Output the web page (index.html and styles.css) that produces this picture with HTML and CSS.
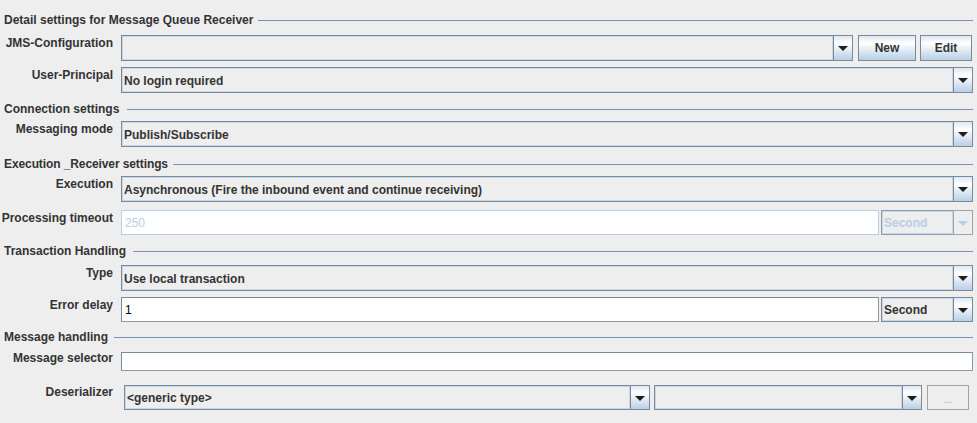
FILE: index.html
```html
<!DOCTYPE html>
<html>
<head>
<meta charset="utf-8">
<link rel="stylesheet" href="styles.css">
</head>
<body>
<div class="panel">
  <div class="title t1"><span>Detail settings for Message Queue Receiver</span><i class="rule"></i></div>

  <div class="row r-jms">
    <div class="label">JMS-Configuration</div>
    <div class="field-group">
      <div class="combo grow"><div class="combo-text"></div><div class="arrow"><b class="tri"></b></div></div>
      <button class="btn btn-new">New</button>
      <button class="btn btn-edit">Edit</button>
    </div>
  </div>

  <div class="row r-user">
    <div class="label">User-Principal</div>
    <div class="combo"><div class="combo-text">No login required</div><div class="arrow"><b class="tri"></b></div></div>
  </div>

  <div class="title t2"><span>Connection settings</span><i class="rule"></i></div>

  <div class="row r-mode">
    <div class="label">Messaging mode</div>
    <div class="combo"><div class="combo-text">Publish/Subscribe</div><div class="arrow"><b class="tri"></b></div></div>
  </div>

  <div class="title t3"><span class="exec-title">Execution _Receiver settings</span><i class="rule"></i></div>

  <div class="row r-exec">
    <div class="label">Execution</div>
    <div class="combo"><div class="combo-text">Asynchronous (Fire the inbound event and continue receiving)</div><div class="arrow"><b class="tri"></b></div></div>
  </div>

  <div class="row r-timeout">
    <div class="label">Processing timeout</div>
    <div class="field-group g2">
      <div class="textfield disabled grow">250</div>
      <div class="combo small disabled"><div class="combo-text">Second</div><div class="arrow"><b class="tri"></b></div></div>
    </div>
  </div>

  <div class="title t4"><span>Transaction Handling</span><i class="rule"></i></div>

  <div class="row r-type">
    <div class="label">Type</div>
    <div class="combo"><div class="combo-text">Use local transaction</div><div class="arrow"><b class="tri"></b></div></div>
  </div>

  <div class="row r-delay">
    <div class="label">Error delay</div>
    <div class="field-group g2">
      <div class="textfield grow">1</div>
      <div class="combo small"><div class="combo-text">Second</div><div class="arrow"><b class="tri"></b></div></div>
    </div>
  </div>

  <div class="title t5"><span>Message handling</span><i class="rule"></i></div>

  <div class="row r-sel">
    <div class="label">Message selector</div>
    <div class="textfield thin"></div>
  </div>

  <div class="row r-deser">
    <div class="label">Deserializer</div>
    <div class="field-group deser">
      <div class="combo c-generic"><div class="combo-text">&lt;generic type&gt;</div><div class="arrow"><b class="tri"></b></div></div>
      <div class="combo c-second"><div class="combo-text"></div><div class="arrow"><b class="tri"></b></div></div>
      <button class="btn dots">...</button>
    </div>
  </div>
</div>
</body>
</html>
```

FILE: styles.css
```css
* { box-sizing: border-box; }
html, body {
  margin: 0;
  background: #eeeeee;
}
body {
  font-family: "Liberation Sans", Arial, sans-serif;
  font-size: 12px;
  font-weight: bold;
  color: #333333;
  width: 977px;
  height: 423px;
  overflow: hidden;
}
.panel {
  padding: 12px 4px 0 4px;
  display: flex;
  flex-direction: column;
}

/* titled separators */
.title {
  display: flex;
  align-items: center;
  height: 14px;
  line-height: 14px;
  white-space: nowrap;
}
.title > span { padding-right: 5px; }
.exec-title { letter-spacing: -0.1px; }
.rule {
  flex: 1;
  height: 1px;
  background: #7b8fbd;
  margin-top: 1px;
}
.t1 { margin-top: 1px; }
.t2 { margin-top: 9px; }
.t2 > span { padding-right: 8px; }
.t3 { margin-top: 10px; }
.t4 { margin-top: 9px; }
.t4 > span { padding-right: 7px; }
.t5 { margin-top: 8px; }
.t5 > span { padding-right: 6px; }

/* form rows */
.row {
  display: grid;
  grid-template-columns: 117px 1fr;
  height: 26px;
}
.label {
  display: flex;
  justify-content: flex-end;
  white-space: nowrap;
  padding-right: 8px;
  padding-top: 1px;
  line-height: 14px;
}
.r-jms { margin-top: 8px; }
.r-user { margin-top: 6px; }
.r-mode { margin-top: 5px; }
.r-exec { margin-top: 5px; }
.r-timeout { margin-top: 8px; height: 25px; }
.r-type { margin-top: 7px; }
.r-delay { margin-top: 6px; height: 25px; }
.r-sel { margin-top: 8px; height: 19px; }
.r-sel .label { padding-top: 0; margin-top: -1px; }
.r-deser { margin-top: 14px; height: 25px; }
.r-deser .label { padding-top: 0; }

.field-group {
  display: flex;
  gap: 5px;
  height: 100%;
}
.field-group.g2 { gap: 2px; }
.grow { flex: 1; }

/* combo box */
.combo {
  display: flex;
  height: 100%;
  border: 1px solid #7a8a99;
  background: #eeeeee;
}
.combo-text {
  flex: 1;
  box-shadow: inset 0 0 0 1px #c8d7e7;
  padding-left: 2px;
  padding-top: 1px;
  display: flex;
  align-items: center;
  white-space: nowrap;
  overflow: hidden;
  color: #333333;
}
.arrow {
  width: 19px;
  border-left: 1px solid #7a8a99;
  background: linear-gradient(to bottom, #dde8f3 0%, #ffffff 30%, #b8cfe5 100%);
  display: flex;
  align-items: center;
  justify-content: center;
}
.tri {
  width: 0;
  height: 0;
  border-left: 5px solid transparent;
  border-right: 5px solid transparent;
  border-top: 5px solid #1e1e1e;
  margin-top: 1px;
}
.combo.small { width: 92px; }
.combo.disabled { border-color: #8a9cb0; }
.combo.disabled .combo-text { color: #b8cfe5; }
.combo.disabled .arrow {
  background: #eeeeee;
  border: 1px solid #a3a3a3;
  margin: -1px -1px -1px 0;
  width: 20px;
}
.combo.disabled .tri { border-top-color: #b8cfe5; }

/* text field */
.textfield {
  height: 100%;
  background: #ffffff;
  border: 1px solid #7a8a99;
  border-right-color: #8c9aa8;
  border-bottom-color: #8c9aa8;
  padding-left: 3px;
  padding-top: 1px;
  display: flex;
  align-items: center;
  font-weight: normal;
  color: #000;
  font-size: 12px;
}
.textfield.disabled {
  border-color: #b8cfe5;
  color: #b8cfe5;
}

/* buttons */
.btn {
  font: inherit;
  color: #333333;
  height: 100%;
  padding: 0;
  border: 1px solid #7a8a99;
  background: linear-gradient(to bottom, #dde8f3 0%, #ffffff 30%, #b8cfe5 100%);
}
.btn-new { width: 58px; }
.btn-edit { width: 52px; margin-left: -1px; margin-right: 1px; }

/* deserializer */
.field-group.deser {
  padding-left: 3px;
  gap: 4px;
}
.c-generic { width: 526px; }
.c-second { width: 268px; }
.btn.dots {
  width: 42px;
  margin-left: 1px;
  background: #eeeeee;
  border: 1px solid #a3a3a3;
  color: #a0a0a0;
  font-weight: normal;
  font-size: 10px;
  padding-top: 3px;
}
```
